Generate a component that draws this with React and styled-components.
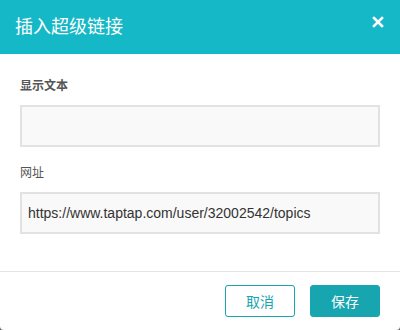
import React from "react";
import styled, { createGlobalStyle } from "styled-components";

const GlobalStyle = createGlobalStyle`
  html, body {
    margin: 0;
    padding: 0;
    background: #6b6b6b;
  }
  * { box-sizing: border-box; }
`;

const Dialog = styled.div`
  width: 400px;
  height: 330px;
  background: #fff;
  border-radius: 0 0 4px 4px;
  display: flex;
  flex-direction: column;
  font-family: "Liberation Sans", Arial, "Noto Sans CJK SC", sans-serif;
  overflow: hidden;
`;

const Header = styled.div`
  height: 54px;
  background: #15b8c6;
  display: flex;
  align-items: center;
  justify-content: space-between;
  padding: 0 16px 5px 15px;
`;

const Title = styled.h3`
  margin: 0;
  color: #fff;
  font-size: 18px;
  font-weight: normal;
  font-family: "Microsoft YaHei", "Noto Sans CJK SC", sans-serif;
`;

const Close = styled.button`
  border: 0;
  background: none;
  padding: 0;
  width: 12px;
  height: 12px;
  display: flex;
  cursor: pointer;
  margin-bottom: 6px;
`;

const Body = styled.div`
  flex: 1;
  padding: 24px 20px 0;
  display: flex;
  flex-direction: column;
`;

const Label = styled.label`
  display: block;
  font-size: 12px;
  font-weight: ${(p) => (p.bold ? "bold" : "normal")};
  color: #555;
  line-height: 14px;
  font-family: "Noto Sans CJK SC", sans-serif;
  margin-bottom: 13px;
`;

const Input = styled.input`
  display: block;
  width: 360px;
  height: 42px;
  border: 2px solid #e2e2e2;
  background: #f9f9f9;
  padding: 0 6px;
  font-size: 14px;
  color: #333;
  font-family: "Liberation Sans", Arial, sans-serif;
  outline: none;
  margin-bottom: ${(p) => p.gap}px;
`;

const Footer = styled.div`
  border-top: 1px solid #e5e5e5;
  height: 59px;
  display: flex;
  justify-content: flex-end;
  align-items: flex-start;
  gap: 15px;
  padding: 13px 20px 0;
`;

const Button = styled.button`
  width: 70px;
  height: 32px;
  border-radius: 3px;
  font-size: 14px;
  font-family: "Noto Sans CJK SC", sans-serif;
  cursor: pointer;
  border: 1px solid #17a5b0;
  background: ${(p) => (p.primary ? "#17a5b0" : "#fff")};
  color: ${(p) => (p.primary ? "#fff" : "#17a5b0")};
`;

function App() {
  return (
    <>
      <GlobalStyle />
      <Dialog>
        <Header>
          <Title>插入超级链接</Title>
          <Close aria-label="close">
            <svg width="12" height="12" viewBox="0 0 12 12">
              <path d="M2 2 L10 10 M10 2 L2 10" stroke="#fff" strokeWidth="2.6" strokeLinecap="square" />
            </svg>
          </Close>
        </Header>
        <Body>
          <Label bold>显示文本</Label>
          <Input gap={18} defaultValue="" />
          <Label>网址</Label>
          <Input gap={0} defaultValue="https://www.taptap.com/user/32002542/topics" />
        </Body>
        <Footer>
          <Button>取消</Button>
          <Button primary>保存</Button>
        </Footer>
      </Dialog>
    </>
  );
}

export default App;
